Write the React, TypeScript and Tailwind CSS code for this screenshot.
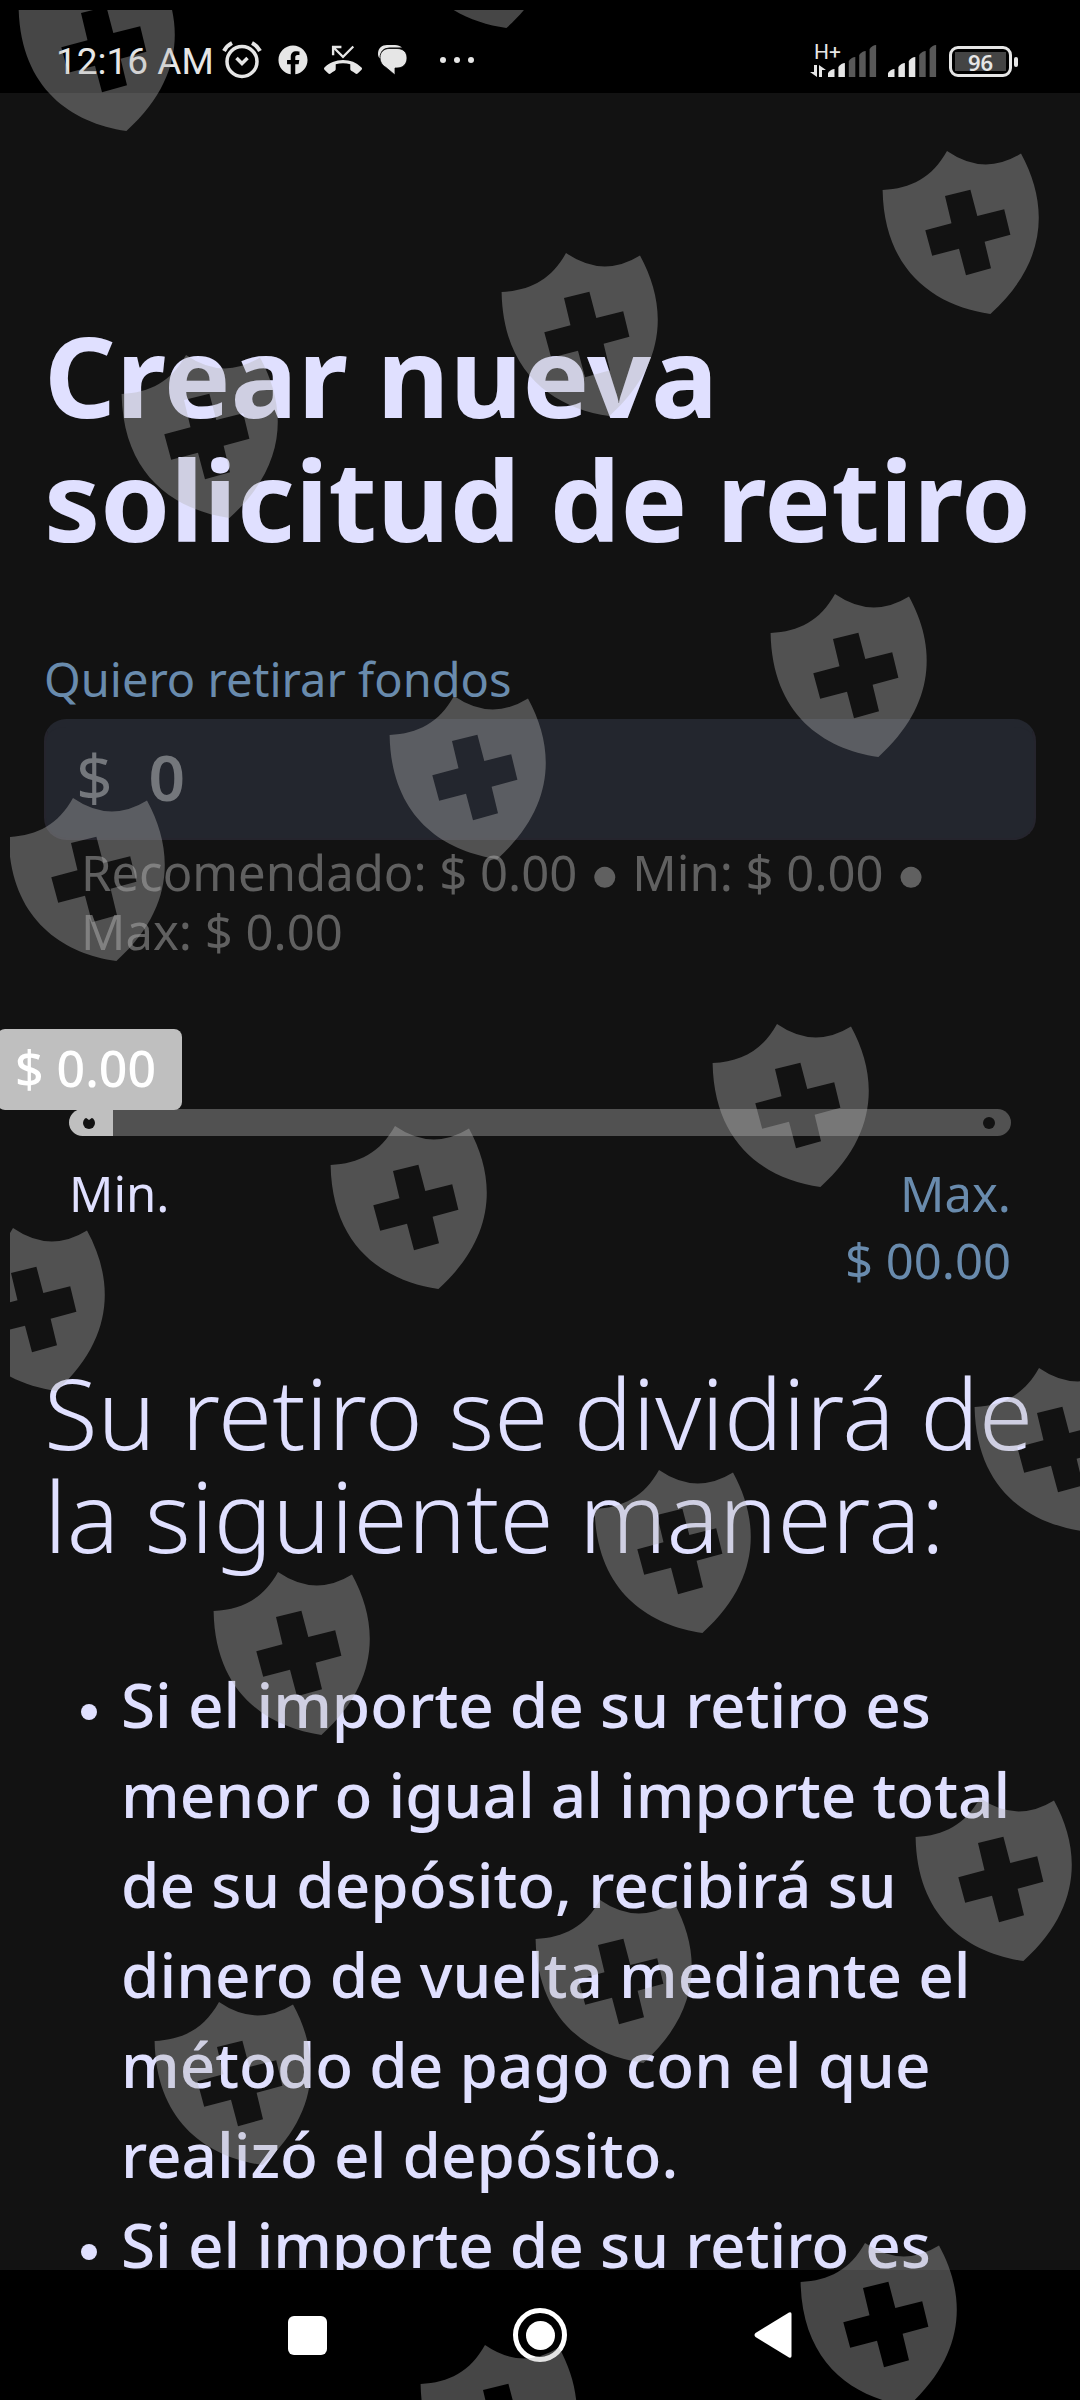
import { useState } from "react";
import { FaFacebook } from "react-icons/fa";
import { MdPhoneMissed } from "react-icons/md";

const items = [
  "Si el importe de su retiro es menor o igual al importe total de su depósito, recibirá su dinero de vuelta mediante el método de pago con el que realizó el depósito.",
  "Si el importe de su retiro es",
];

const shields: [number, number][] = [
  [83, -32],
  [463, -135],
  [947, 151],
  [566, 253],
  [186, 355],
  [835, 594],
  [454, 696],
  [73, 798],
  [777, 1024],
  [395, 1126],
  [13, 1228],
  [1039, 1368],
  [659, 1470],
  [278, 1572],
  [980, 1798],
  [600, 1900],
  [219, 2002],
  [865, 2243],
  [485, 2345],
];

const SHIELD_PATH =
  "M-64.4 39C-36 37.5-15 27 0 0Q37 25.5 74 2.5C101 52 102 110 43.4 163C-12 155-63 120-64.4 39Z" +
  "M-2 45L23.4 38.7L30.3 65L57.2 58.3L63.4 83.7L37.6 90.7L44 117.3L19 124.3L12 97.7L-14.8 104.7L-21.7 79.3L4.5 72.3Z";

const AlarmIcon = () => (
  <svg width="40" height="38" viewBox="0 0 40 38" fill="none" stroke="#e6e6e6" aria-hidden="true">
    <circle cx="20" cy="20.5" r="15" strokeWidth="3.5" />
    <path d="M2 10C4 6 6 4 10 2M38 10C36 6 34 4 30 2" strokeWidth="4" />
    <path d="M14.5 17L20 22.5L25.5 17" strokeWidth="3.5" />
  </svg>
);

const ChatIcon = () => (
  <svg width="30" height="30" viewBox="0 0 30 30" aria-hidden="true">
    <path d="M0 9C0 3 4 0 9 0H17C20 0 22 1 24 2.5H12C6 2.5 2.5 6 2.5 11V14C1 13 0 11 0 9Z" fill="#e6e6e6" />
    <path
      d="M2 12.5C2 7 6 3.5 11 3.5H19C25 3.5 29 7 29 13C29 19 25 23 19 23H17V30L8 22.5C4 20 2 17 2 12.5Z"
      fill="#e6e6e6"
      stroke="#000"
      strokeWidth="0.8"
    />
  </svg>
);

const SignalIcon = ({ level }: { level: number }) => (
  <svg width="49" height="32" viewBox="0 0 49 32" aria-hidden="true">
    {[24, 18, 12, 6, 0].map((top, i) => (
      <path
        key={top}
        d={`M${i * 10.4} 32V${top + 4}Q${i * 10.4 + 3} ${top} ${i * 10.4 + 6.5} ${top}V32Z`}
        fill={i < level ? "#e6e6e6" : "#585858"}
      />
    ))}
  </svg>
);

const StatusBar = () => (
  <header className="flex h-[93px] shrink-0 items-center justify-between bg-black pt-[27px] pr-[62px] pl-[56px] text-[#e6e6e6]">
    <div className="flex items-center">
      <span className="pt-1 font-[Roboto,sans-serif] text-[37px] leading-[40px]">12:16 AM</span>
      <span className="ml-2 flex items-center gap-4">
        <AlarmIcon />
        <FaFacebook size={30} />
        <MdPhoneMissed size={38} />
        <ChatIcon />
      </span>
      <span className="ml-8 flex gap-2">
        <i className="size-[6px] rounded-full bg-[#e6e6e6]" />
        <i className="size-[6px] rounded-full bg-[#e6e6e6]" />
        <i className="size-[6px] rounded-full bg-[#e6e6e6]" />
      </span>
    </div>
    <div className="flex items-end">
      <div className="flex w-[18px] flex-col gap-1">
        <span className="pl-1 font-[Roboto,sans-serif] text-[21px] leading-[18px]">H+</span>
        <svg width="16" height="12" viewBox="0 0 16 12" fill="#e6e6e6" aria-hidden="true">
          <path d="M4 0H7V12L0 7H4ZM9 12V0L16 5H12V12Z" />
        </svg>
      </div>
      <SignalIcon level={2} />
      <span className="w-[11px]" />
      <SignalIcon level={3} />
      <div className="ml-3 flex items-center">
        <span className="flex h-[31px] w-[63px] items-center rounded-[9px] border-[3px] border-[#e6e6e6] p-[3px]">
          <span className="flex h-[19px] flex-1 items-center justify-center bg-[#444] font-['Noto_Sans',sans-serif] text-[22px] leading-none font-semibold">
            96
          </span>
        </span>
        <i className="ml-[2px] h-[10px] w-[4px] rounded-sm bg-[#e6e6e6]" />
      </div>
    </div>
  </header>
);

const NavBar = () => (
  <nav className="flex h-[130px] shrink-0 items-center justify-center gap-[178px] bg-black">
    <button type="button" aria-label="Recientes" className="flex size-14 items-center justify-center">
      <span className="size-[39px] rounded-md bg-white" />
    </button>
    <button type="button" aria-label="Inicio" className="flex size-[54px] items-center justify-center rounded-full border-[5px] border-white">
      <span className="size-[29px] rounded-full bg-white" />
    </button>
    <button type="button" aria-label="Atrás" className="flex size-14 items-center justify-center">
      <svg width="38" height="46" viewBox="0 0 38 46" fill="#fff" aria-hidden="true">
        <path d="M35 0.5Q37.5 -0.5 37.5 2V44Q37.5 46.5 35 45.5L1.5 25Q-0.5 23 1.5 21Z" />
      </svg>
    </button>
  </nav>
);

const ShieldPattern = () => (
  <div className="pointer-events-none absolute inset-0 overflow-hidden pt-[10px] pl-[10px]">
    <svg className="h-full w-full" aria-hidden="true">
      <g transform="translate(-10 -10)" fill="#b4b4b4" fillOpacity="0.39" fillRule="evenodd">
        {shields.map(([x, y]) => (
          <path key={`${x}-${y}`} d={SHIELD_PATH} transform={`translate(${x} ${y})`} />
        ))}
      </g>
    </svg>
  </div>
);

const AmountSlider = ({ value, onChange }: { value: string; onChange: (value: string) => void }) => (
  <div className="mt-[148px] px-[25px]">
    <div className="relative flex">
      <input
        type="range"
        min="0"
        max="100"
        aria-label="Importe del retiro"
        value={value}
        onChange={(e) => onChange(e.target.value)}
        className="h-[27px] w-full appearance-none rounded-full bg-[#515151] bg-[linear-gradient(#bfbfbf,#bfbfbf)] bg-[length:44px_100%] bg-no-repeat [&::-webkit-slider-thumb]:size-0 [&::-webkit-slider-thumb]:appearance-none"
      />
      <i className="absolute top-2 left-[14px] size-3 rounded-full bg-[#121212]" />
      <i className="absolute top-2 right-4 size-3 rounded-full bg-[#121212]" />
      <output className="absolute bottom-[26px] -left-[72px] flex h-[81px] w-[185px] items-center rounded-lg bg-[#bfbfbf] pb-1 pl-[18px] text-[50px] leading-none font-medium text-white">
        $ 0.00
      </output>
      <svg width="14" height="5" viewBox="0 0 14 5" className="absolute top-[6px] left-[13px]" fill="#bfbfbf" aria-hidden="true">
        <path d="M0 0H14L7 5Z" />
      </svg>
    </div>
    <div className="mt-6 flex justify-between text-[49px] leading-[67px]">
      <span>Min.</span>
      <span className="text-right text-[#698bad]">
        Max.
        <br />$ 00.00
      </span>
    </div>
  </div>
);

export default function App() {
  const [amount, setAmount] = useState("0");

  return (
    <div className="relative flex h-screen flex-col overflow-hidden bg-[#121212] font-['Noto_Sans',sans-serif] text-[#e0e0ff]">
      <StatusBar />

      <main className="min-h-0 flex-1 overflow-hidden px-11 pt-[220px]">
        <h1 className="text-[112px] leading-[124px] font-bold">
          Crear nueva
          <br />
          <span className="whitespace-nowrap">solicitud de retiro</span>
        </h1>

        <label htmlFor="amount" className="mt-[88px] block text-[47px] leading-[60px] text-[#698bad]">
          Quiero retirar fondos
        </label>
        <div className="mt-[10px] flex h-[121px] items-center rounded-[22px] border-2 border-t-8 border-[#25242d] border-t-[#23262e] bg-[#23262e] pb-3 pl-[30px] text-[64px] leading-none text-[#74777c]">
          <span>$</span>
          <input
            id="amount"
            type="text"
            inputMode="decimal"
            value={amount}
            onChange={(e) => setAmount(e.target.value)}
            className="ml-9 min-w-0 flex-1 bg-transparent font-semibold outline-none"
          />
        </div>
        <p className="mt-[3px] pl-[37px] text-[49px] leading-[59px] text-[#606060]">
          Recomendado: $ 0.00 ● Min: $ 0.00 ● Max: $ 0.00
        </p>

        <AmountSlider value={amount} onChange={setAmount} />

        <h2 className="mt-[67px] -mr-4 text-[98px] leading-[103px] font-light">
          Su retiro se dividirá de la siguiente manera:
        </h2>

        <ul className="mt-[92px] pl-[37px] text-[62px] leading-[90px] font-medium">
          {items.map((text) => (
            <li key={text} className="flex gap-6">
              <span className="mt-[45px] size-4 shrink-0 rounded-full bg-[#e0e0ff]" />
              <span>{text}</span>
            </li>
          ))}
        </ul>
      </main>

      <NavBar />
      <ShieldPattern />
    </div>
  );
}
